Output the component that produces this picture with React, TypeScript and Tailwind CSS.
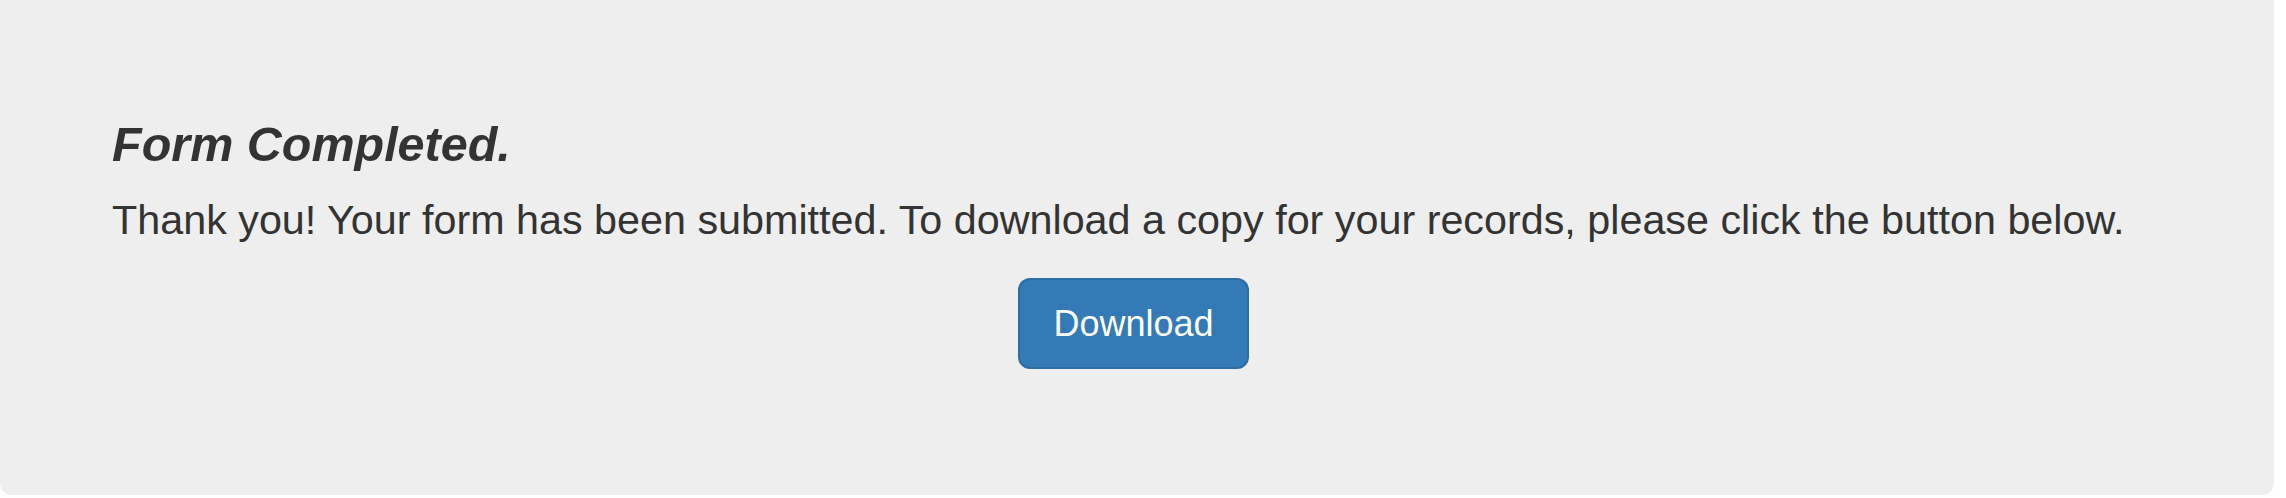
export default function App() {
  return (
    <div className="w-[2286px] h-[498px] bg-white" style={{ fontFamily: '"Liberation Sans", Arial, sans-serif' }}>
      <div className="w-[2274px] h-[495px] bg-[#eeeeee] rounded-b-[12px] pt-[118px] pl-[112px] pr-[112px] text-[#333333]">
        <h2 className="text-[48.5px] leading-[1.1] font-bold italic mb-[19px]">Form Completed.</h2>
        <p className="text-[41.3px] leading-[60px] font-light mb-[28px] whitespace-nowrap">
          Thank you! Your form has been submitted. To download a copy for your records, please click the button below.
        </p>
        <div className="text-center">
          <button className="h-[91px] w-[231px] rounded-[12px] bg-[#337ab7] border-2 border-[#2e6da4] text-white text-[36px] leading-[48px] -ml-[7px]">
            Download
          </button>
        </div>
      </div>
    </div>
  )
}
